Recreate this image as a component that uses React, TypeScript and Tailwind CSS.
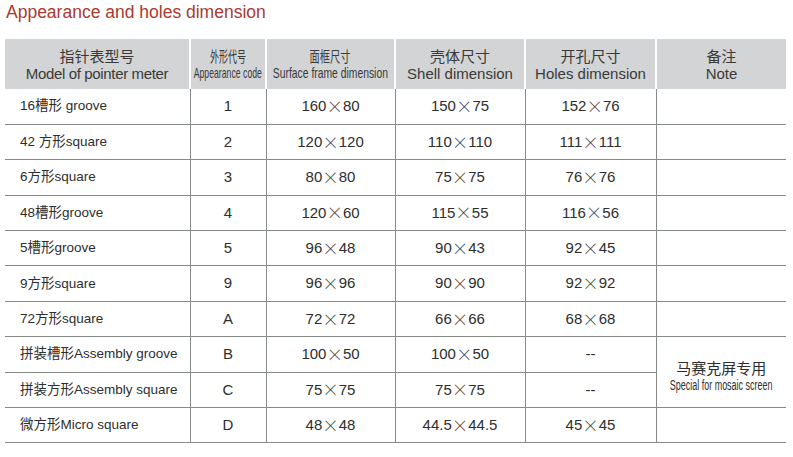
const rows = [
  { model: '16槽形 groove', code: '1', surface: '160×80', shell: '150×75', holes: '152×76' },
  { model: '42 方形square', code: '2', surface: '120×120', shell: '110×110', holes: '111×111' },
  { model: '6方形square', code: '3', surface: '80×80', shell: '75×75', holes: '76×76' },
  { model: '48槽形groove', code: '4', surface: '120×60', shell: '115×55', holes: '116×56' },
  { model: '5槽形groove', code: '5', surface: '96×48', shell: '90×43', holes: '92×45' },
  { model: '9方形square', code: '9', surface: '96×96', shell: '90×90', holes: '92×92' },
  { model: '72方形square', code: 'A', surface: '72×72', shell: '66×66', holes: '68×68' },
  { model: '拼装槽形Assembly groove', code: 'B', surface: '100×50', shell: '100×50', holes: '--' },
  { model: '拼装方形Assembly square', code: 'C', surface: '75×75', shell: '75×75', holes: '--' },
  { model: '微方形Micro square', code: 'D', surface: '48×48', shell: '44.5×44.5', holes: '45×45' },
]

const font = { fontFamily: '"Liberation Sans", "Noto Sans CJK SC", sans-serif' }

// condensed header line, centred even when wider than the cell
function Narrow({ children, className = '' }: { children: React.ReactNode; className?: string }) {
  return (
    <div className="flex justify-center">
      <span className={'inline-block shrink-0 origin-center whitespace-nowrap ' + className}>{children}</span>
    </div>
  )
}

// size like "160×80" with the wide thin multiplication sign of the print
function Size({ value }: { value: string }) {
  const parts = value.split('×')
  if (parts.length < 2) return <>{value}</>
  return (
    <span className="inline-flex items-center">
      {parts[0]}
      <span
        className="inline-block text-[16.5px] leading-[15px] font-extralight text-[#3a3a3a]"
        style={{ fontFamily: '"Noto Sans CJK SC", sans-serif' }}
      >
        ×
      </span>
      {parts[1]}
    </span>
  )
}

export default function App() {
  const head = 'bg-[#d2d4d5] border-x-2 border-white text-center align-middle text-[#3a3a3a] font-normal pt-[2px]'
  const cell = 'border-b border-[#868b87] align-middle text-[#2e2e2e] h-[35.4px]'
  const num = cell + ' border-l border-[#737b75] text-center text-[15px]'

  return (
    <div className="w-[793px] h-[457px] bg-white" style={font}>
      <h1 className="pl-[6px] pt-[1px] text-[17.5px] leading-[22px] text-[#aa3a2f]">
        Appearance and holes dimension
      </h1>
      <table className="mt-[16px] ml-[5px] w-[781px] table-fixed border-collapse">
        <colgroup>
          <col className="w-[185px]" />
          <col className="w-[76px]" />
          <col className="w-[129px]" />
          <col className="w-[130px]" />
          <col className="w-[131px]" />
          <col className="w-[130px]" />
        </colgroup>
        <thead>
          <tr className="h-[50px]">
            <th className={head + ' border-l-0 text-[15px] leading-[17px]'}>
              <div>指针表型号</div>
              <div className="tracking-[-0.35px]">Model of pointer meter</div>
            </th>
            <th className={head + ' text-[15px] leading-[16px]'}>
              <Narrow className="scale-x-[0.6]">外形代号</Narrow>
              <Narrow className="scale-x-[0.58]">Appearance code</Narrow>
            </th>
            <th className={head + ' text-[15px] leading-[16px]'}>
              <Narrow className="scale-x-[0.68]">面框尺寸</Narrow>
              <Narrow className="scale-x-[0.69]">Surface frame dimension</Narrow>
            </th>
            <th className={head + ' text-[15px] leading-[17px]'}>
              <div>壳体尺寸</div>
              <div>Shell dimension</div>
            </th>
            <th className={head + ' text-[15px] leading-[17px]'}>
              <div>开孔尺寸</div>
              <div>Holes dimension</div>
            </th>
            <th className={head + ' border-r-0 text-[15px] leading-[17px]'}>
              <div>备注</div>
              <div>Note</div>
            </th>
          </tr>
        </thead>
        <tbody>
          {rows.map((r, i) => (
            <tr key={r.code}>
              <td className={cell + ' text-left pl-[15px] text-[13.5px] whitespace-nowrap'}>{r.model}</td>
              <td className={num}>{r.code}</td>
              <td className={num}>
                <Size value={r.surface} />
              </td>
              <td className={num}>
                <Size value={r.shell} />
              </td>
              <td className={num}>
                <Size value={r.holes} />
              </td>
              {i === 7 ? (
                <td rowSpan={2} className={num + ' leading-[17px] pt-[10px]'}>
                  <div>马赛克屏专用</div>
                  <Narrow className="scale-x-[0.64] text-[14px]">Special for mosaic screen</Narrow>
                </td>
              ) : i === 8 ? null : (
                <td className={num}></td>
              )}
            </tr>
          ))}
        </tbody>
      </table>
    </div>
  )
}
